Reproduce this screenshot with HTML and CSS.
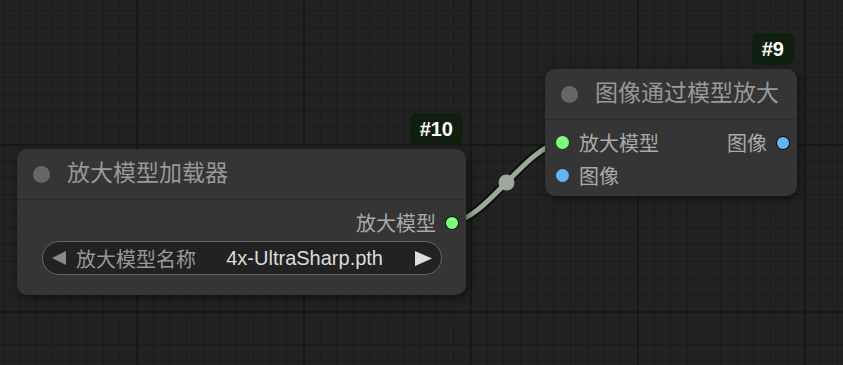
FILE: index.html
```html
<!DOCTYPE html>
<html lang="zh-CN">
<head>
	<meta charset="UTF-8">
	<title>Upscale Graph</title>
<link rel="stylesheet" href="styles.css">
</head>

<body>
    <div class="canvas">
        <!-- links go under the nodes -->
        <svg class="links" width="843" height="365" viewBox="0 0 843 365">
            <path class="link-shadow" d="M451 222 C485 222 528 143 562 143"/>
            <path class="link" d="M451 222 C485 222 528 143 562 143"/>
            <circle class="link-center" cx="506.5" cy="182.5" r="8"/>
        </svg>

        <div class="node node_loader">
            <div class="badge">#10</div>
            <div class="node_title">
                <span class="title_dot"></span>
                <span class="title_text">放大模型加载器</span>
            </div>
            <div class="node_body">
                <div class="slot_row">
                    <span class="slot_out">放大模型<i class="dot dot_out green"></i></span>
                </div>
                <div class="widget">
                    <svg class="arrow arrow_left" width="14" height="14" viewBox="0 0 14 14"><polygon points="14,0 0,7 14,14"/></svg>
                    <span class="widget_label">放大模型名称</span>
                    <span class="widget_value">4x-UltraSharp.pth</span>
                    <svg class="arrow arrow_right" width="17" height="15" viewBox="0 0 17 15"><polygon points="0,0 17,7.5 0,15"/></svg>
                </div>
            </div>
        </div>

        <div class="node node_upscale">
            <div class="badge">#9</div>
            <div class="node_title">
                <span class="title_dot"></span>
                <span class="title_text">图像通过模型放大</span>
            </div>
            <div class="node_body">
                <div class="slot_row">
                    <span class="slot_in"><i class="dot green"></i>放大模型</span>
                    <span class="slot_out">图像<i class="dot dot_out blue"></i></span>
                </div>
                <div class="slot_row">
                    <span class="slot_in"><i class="dot blue"></i>图像</span>
                </div>
            </div>
        </div>
    </div>
</body>
</html>
```

FILE: styles.css
```css
body {
    margin: 0;
    font-family: "Liberation Sans", "Noto Sans CJK SC", sans-serif;
    background-color: #222;
    overflow: hidden;
}

.canvas {
    position: relative;
    width: 843px;
    height: 365px;
    background-color: #222;
    background-image:
        linear-gradient(90deg, #181818 2px, transparent 2px),
        linear-gradient(#181818 2px, transparent 2px),
        linear-gradient(90deg, #1a1a1a 1px, transparent 1px),
        linear-gradient(#1a1a1a 1px, transparent 1px);
    background-size: 167px 167px, 167px 167px, 16.7px 16.7px, 16.7px 16.7px;
    background-position: 136px 0, 0 144px, 2.6px 0, 0 10.4px;
}

.links {
    position: absolute;
    left: 0;
    top: 0;
}
.link-shadow {
    fill: none;
    stroke: rgba(0, 0, 0, 0.55);
    stroke-width: 9;
}
.link {
    fill: none;
    stroke: #9a9;
    stroke-width: 5;
}
.link-center {
    fill: #9a9;
}

/* nodes */
.node {
    position: absolute;
    box-sizing: border-box;
    background-color: #353535;
    border-radius: 10px;
    box-shadow: 2px 3px 8px rgba(0, 0, 0, 0.5);
}
.node_loader {
    left: 17px;
    top: 149px;
    width: 449px;
    height: 146px;
}
.node_upscale {
    left: 545px;
    top: 69px;
    width: 252px;
    height: 127px;
}

.badge {
    position: absolute;
    right: 3px;
    bottom: calc(100% + 4px);
    height: 32px;
    padding: 0 10px;
    display: flex;
    align-items: center;
    background-color: #0f1f0f;
    border-radius: 7px;
    color: #fff;
    font-weight: bold;
    font-size: 20px;
}

.node_title {
    height: 50px;
    display: flex;
    align-items: center;
    gap: 17px;
    padding-left: 16px;
    border-bottom: 1px solid #2c2c2c;
}
.title_dot {
    width: 17px;
    height: 17px;
    border-radius: 50%;
    background-color: #666;
}
.title_text {
    font-size: 23px;
    line-height: 26px;
    padding-bottom: 2px;
    color: #999;
}

.node_body {
    padding-top: 6px;
}
.slot_row {
    height: 33px;
    display: flex;
    align-items: center;
    font-size: 20px;
    color: #aaa;
}
.slot_in {
    display: flex;
    align-items: center;
    gap: 10px;
    padding-left: 11px;
}
.slot_out {
    display: flex;
    align-items: center;
    gap: 9px;
    padding-right: 7px;
    margin-left: auto;
}

.dot {
    display: block;
    width: 13px;
    height: 13px;
    border-radius: 50%;
}
.dot_out {
    width: 12px;
    height: 12px;
    border: 1.5px solid #000;
}
.green {
    background-color: #7f7;
}
.blue {
    background-color: #64b5f6;
}

/* combo widget */
.widget {
    box-sizing: border-box;
    height: 34px;
    margin: 2px 24px 0 25px;
    padding: 0 9px;
    display: flex;
    align-items: center;
    border: 1px solid #666;
    border-radius: 17px;
    background-color: #222;
    font-size: 20px;
}
.arrow_left {
    fill: #8a8a8a;
}
.arrow_right {
    fill: #ddd;
}
.widget_label {
    margin-left: 10px;
    color: #999;
}
.widget_value {
    margin-left: auto;
    margin-right: 32px;
    color: #ddd;
}
```
